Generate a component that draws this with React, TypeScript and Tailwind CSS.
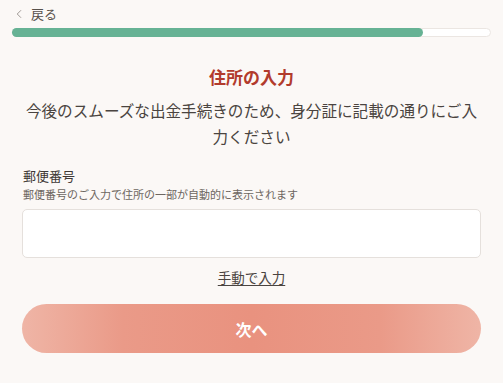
import { ChevronLeft } from 'lucide-react';

const font = { fontFamily: '"Noto Sans CJK JP", "Noto Sans", sans-serif' };

export default function App() {
  return (
    <div
      className="min-h-[383px] w-full bg-[#fbf8f6] text-[#4a4440] font-['Noto_Sans_CJK_JP',sans-serif]"
      style={font}
    >
      <div className="px-3 pt-[5px]">
        <button className="flex items-center gap-[5px] text-[13px] leading-[18px] text-[#57504b]">
          <ChevronLeft className="h-[14px] w-[14px] stroke-[1.4] text-[#8a837e]" />
          <span>戻る</span>
        </button>
        <div className="mt-[5px] h-[9px] w-[479px] rounded-full border border-[#ebe6e2] bg-white">
          <div className="-m-px h-[9px] w-[411px] rounded-full bg-[#66b294]" />
        </div>
      </div>

      <div className="flex flex-col items-center px-[22px] pt-[28px]">
        <h1 className="text-[17px] font-bold leading-[24px] text-[#b23b2c]">住所の入力</h1>
        <p className="mt-[8px] text-center text-[15.6px] leading-[26px] text-[#4a4440]">
          今後のスムーズな出金手続きのため、身分証に記載の通りにご入力ください
        </p>
      </div>

      <div className="mt-[18px] px-[22px]">
        <label className="block pl-px text-[13px] leading-[18px] text-[#3f3935]">郵便番号</label>
        <p className="mt-[1px] pl-px text-[11px] leading-[16px] text-[#6d6660]">
          郵便番号のご入力で住所の一部が自動的に表示されます
        </p>
        <input
          type="text"
          className="mt-[7px] block h-[49px] w-full rounded-[5px] border border-[#e5e0dc] bg-white px-3 outline-none"
        />
        <div className="mt-[10px] flex justify-center">
          <a className="text-[13.5px] leading-[18px] text-[#4a4440] underline underline-offset-2">手動で入力</a>
        </div>
        <button className="mt-[18px] flex h-[49px] w-full items-center justify-center rounded-full bg-[linear-gradient(90deg,#efb5a6_0%,#ea9a88_22%,#e9927f_50%,#ea9a88_78%,#efb5a6_100%)] text-[16px] font-bold text-white">
          次へ
        </button>
      </div>
    </div>
  );
}
